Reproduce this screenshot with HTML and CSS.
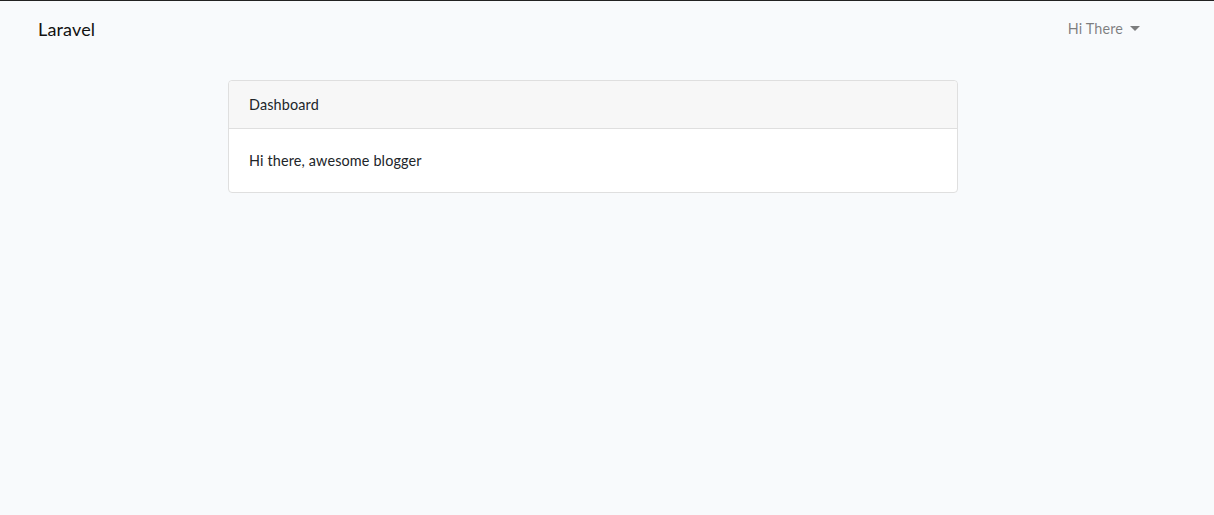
FILE: index.html
```html
<!DOCTYPE html>
<html lang="en">
<head>
    <meta charset="UTF-8">
    <meta name="viewport" content="width=device-width, initial-scale=1.0">
    <title>Laravel</title>
    <link rel="stylesheet" href="styles.css">
</head>
<body>
    <nav class="navbar">
        <a class="navbar-brand" href="#">Laravel</a>
        <a class="user-toggle" href="#">Hi There <span class="caret"></span></a>
    </nav>

    <main class="content">
        <div class="card">
            <div class="card-header">Dashboard</div>
            <div class="card-body">Hi there, awesome blogger</div>
        </div>
    </main>
</body>
</html>
```

FILE: styles.css
```css
/* General Styling */
body {
    margin: 0;
    font-family: "Lato", "Noto Sans", sans-serif;
    font-size: 14.4px;
    line-height: 1.6;
    letter-spacing: 0.15px;
    color: #212529;
    background: #f8fafc;
    border-top: 1px solid #222;
}

a {
    text-decoration: none;
}

/* Navbar */
.navbar {
    display: flex;
    justify-content: space-between;
    align-items: center;
    height: 55px;
    padding: 0 74px 0 38px;
}

.navbar-brand {
    font-size: 18px;
    color: #111;
    margin-top: 1px;
}

.user-toggle {
    display: flex;
    align-items: center;
    color: rgba(0, 0, 0, 0.5);
    font-size: 14.4px;
}

.caret {
    display: inline-block;
    margin-left: 7px;
    border-top: 5px solid rgba(0, 0, 0, 0.5);
    border-left: 5px solid transparent;
    border-right: 5px solid transparent;
}

/* Card */
.content {
    padding: 24px 0 0 228px;
}

.card {
    width: 728px;
    background: #fff;
    border: 1px solid #dfdfdf;
    border-radius: 4px;
}

.card-header {
    padding: 12px 20px;
    background: #f7f7f7;
    border-bottom: 1px solid #dfdfdf;
    border-radius: 4px 4px 0 0;
}

.card-body {
    padding: 20px;
}
```
